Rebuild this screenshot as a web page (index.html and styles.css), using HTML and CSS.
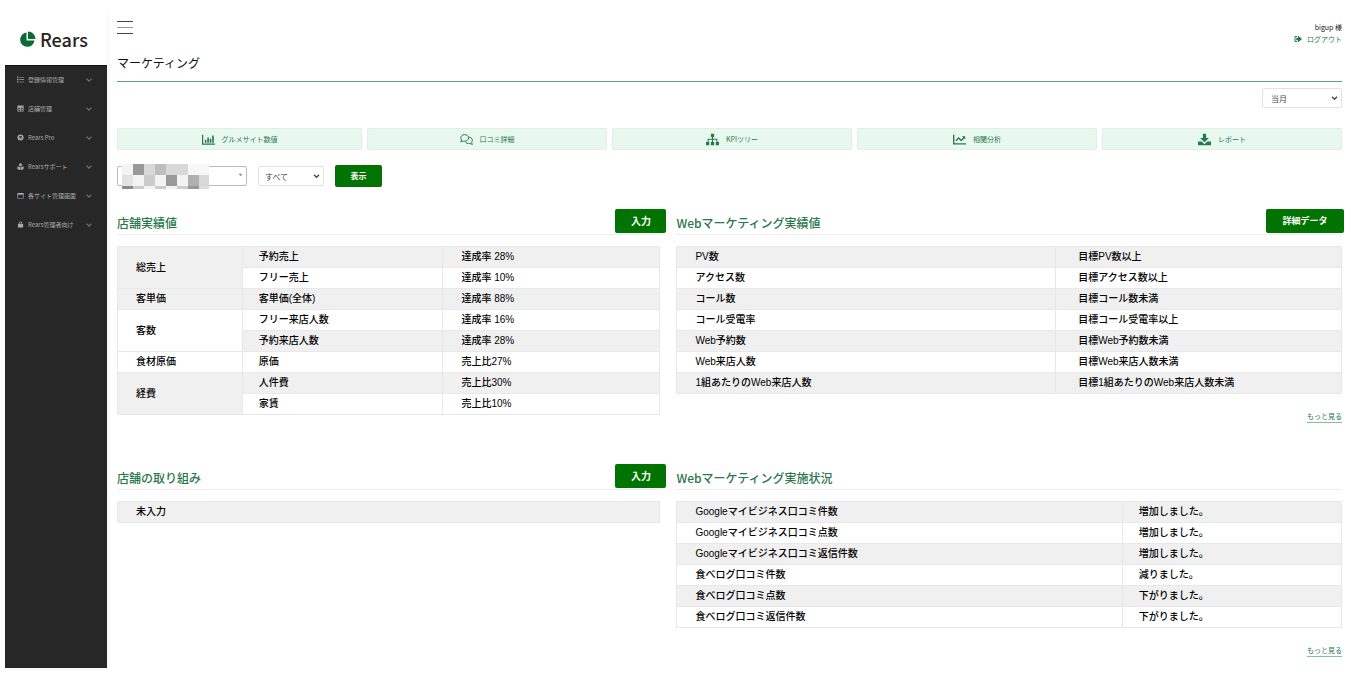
FILE: index.html
```html
<!DOCTYPE html>
<html lang="ja">
<head>
    <meta charset="UTF-8">
    <meta name="viewport" content="width=device-width, initial-scale=1.0">
    <title>マーケティング | Rears</title>
    <link rel="stylesheet" href="styles.css">
</head>
<body>
<div class="wrapper">
    <aside class="sidebar">
        <a href="#" class="logo">
            <svg viewBox="0 0 16 16"><path d="M6.500 1.500V9.500H14.500A7.200 7.200 0 1 1 6.500 1.500Z"/><path d="M8 .5A7.600 7.600 0 0 1 15.600 8.100H8Z"/></svg>
            <span>Rears</span>
        </a>
        <nav class="menu">
            <a href="#">
                <svg viewBox="0 0 16 16"><path d="M0 1h3v3H0zM0 6.500h3v3H0zM0 12h3v3H0zM5 2h11v1.500H5zM5 7.500h11V9H5zM5 13h11v1.500H5z"/></svg>
                <span>登録情報管理</span><i class="chevron"></i>
            </a>
            <a href="#">
                <svg viewBox="0 0 16 16"><path fill-rule="evenodd" d="M1 1h14v14H1zM3 6v2.500h4V6zM9 6v2.500h4V6zM3 10.500V13h4v-2.500zM9 10.500V13h4v-2.500z"/></svg>
                <span>店舗管理</span><i class="chevron"></i>
            </a>
            <a href="#">
                <svg viewBox="0 0 16 16"><path fill-rule="evenodd" d="M8 1a7 7 0 1 1 0 14A7 7 0 0 1 8 1zM5 4v3.500L8 9l3-1.500V4L8 5.500zM5 10l3 2.500 3-2.500-3 .8z"/></svg>
                <span>Rears Pro</span><i class="chevron"></i>
            </a>
            <a href="#">
                <svg viewBox="0 0 16 16"><circle cx="8" cy="4" r="3.500"/><path d="M1 7.500l6.500 2V16L1 14zM15 7.500l-6.500 2V16l6.500-2z"/></svg>
                <span>Rearsサポート</span><i class="chevron"></i>
            </a>
            <a href="#">
                <svg viewBox="0 0 16 16"><path fill-rule="evenodd" d="M1 2h14v13H1zM2.500 6.500v7h11v-7z"/></svg>
                <span>各サイト管理画面</span><i class="chevron"></i>
            </a>
            <a href="#">
                <svg viewBox="0 0 16 16"><path fill-rule="evenodd" d="M2 7h2V5a4 4 0 0 1 8 0v2h2v8H2zM6 7h4V5a2 2 0 0 0-4 0z"/></svg>
                <span>Rears管理者向け</span><i class="chevron"></i>
            </a>
        </nav>
    </aside>

    <main class="main">
        <header class="header">
            <button type="button" class="hamburger" aria-label="メニュー"><span></span><span></span><span></span></button>
            <div class="user">
                <p>bigup 様</p>
                <a href="#">
                    <svg viewBox="0 0 16 16"><path d="M6 2v2H3v8h3v2H3a2 2 0 0 1-2-2V4a2 2 0 0 1 2-2zM8 1l8 7-8 7v-4.500H4.500v-5H8z"/></svg>
                    ログアウト
                </a>
            </div>
        </header>
        <h1>マーケティング</h1>

        <div class="period">
            <select class="select" aria-label="期間">
                <option>当月</option>
            </select>
        </div>

        <nav class="tabs">
            <a href="#">
                <svg viewBox="0 0 16 16"><path d="M0 2h1.500v11H16v1.500H0zM3.500 8.500h2V12h-2zM6.500 5.500h2V12h-2zM9.500 7h2v5h-2zM12.500 3h2v9h-2z"/></svg>
                グルメサイト数値
            </a>
            <a href="#">
                <svg viewBox="0 0 16 16" class="line"><path d="M5.500 2C2.900 2 1 3.700 1 6c0 1 .4 1.900 1 2.600L1 11l3-1.100c.5.100 1 .2 1.500.2 3 0 5-1.800 5-4.100S8.300 2 5.500 2z"/><path d="M10.500 5.100c2.700 0 4.700 1.500 4.700 3.900 0 1-.4 1.800-1 2.500l1 2.500-3.200-1.100c-2.500.5-4.500-.3-5.500-2.400"/></svg>
                口コミ詳細
            </a>
            <a href="#">
                <svg viewBox="0 0 16 16"><path d="M6 1h4v4H8.700v2H14v4h2v4h-4v-4h.8V8.200H8.700V11H10v4H6v-4h1.300V8.200H3.200V11H4v4H0v-4h2V7h5.300V5H6z"/></svg>
                KPIツリー
            </a>
            <a href="#">
                <svg viewBox="0 0 16 16"><path d="M0 2h1.700v10.500H16v1.700H0zM3 9l4-4 3 3 2.500-2.500L11 4h4v4l-1.300-1.300L10 10.500l-3-3L4.200 10.200z"/></svg>
                相関分析
            </a>
            <a href="#">
                <svg viewBox="0 0 16 16"><path d="M6 1h4v5h3.500L8 11.500 2.500 6H6zM0 10.500h4.500L8 13.700l3.500-3.200H16V15H0z"/></svg>
                レポート
            </a>
        </nav>

        <form class="filter">
            <div class="shop">
                <select class="select" aria-label="店舗">
                    <option></option>
                </select>
                <svg class="mosaic" viewBox="0 0 87 25" shape-rendering="crispEdges">
                    <rect width="87" height="25" fill="#f3f3f3"/>
                    <rect x="11" width="11" height="11" fill="#999"/>
                    <rect x="22" width="11" height="11" fill="#d8d8d8"/>
                    <rect x="33" width="11" height="11" fill="#bdbdbd"/>
                    <rect x="44" width="22" height="11" fill="#d8d8d8"/>
                    <rect x="66" width="21" height="11" fill="#f7f7f7"/>
                    <rect y="11" width="11" height="11" fill="#e3e3e3"/>
                    <rect x="22" y="11" width="11" height="11" fill="#cbcbcb"/>
                    <rect x="44" y="11" width="11" height="11" fill="#999"/>
                    <rect x="66" y="11" width="11" height="11" fill="#b0b0b0"/>
                    <rect x="77" y="11" width="10" height="11" fill="#d8d8d8"/>
                    <rect y="22" width="11" height="3" fill="#8a8a8a"/>
                    <rect x="11" y="22" width="11" height="3" fill="#ccc"/>
                    <rect x="33" y="22" width="11" height="3" fill="#ccc"/>
                    <rect x="55" y="22" width="11" height="3" fill="#ccc"/>
                    <rect x="66" y="22" width="11" height="3" fill="#999"/>
                    <rect x="77" y="22" width="10" height="3" fill="#ddd"/>
                </svg>
            </div>
            <select class="select" aria-label="媒体">
                <option>すべて</option>
            </select>
            <button type="submit" class="btn btn-show">表示</button>
        </form>

        <div class="panels">
            <section>
                <div class="panel-head">
                    <h2>店舗実績値</h2>
                    <button type="button" class="btn">入力</button>
                </div>
                <table class="sales">
                    <tr><th rowspan="2">総売上</th><td>予約売上</td><td>達成率 28%</td></tr>
                    <tr><td>フリー売上</td><td>達成率 10%</td></tr>
                    <tr><th>客単価</th><td>客単価(全体)</td><td>達成率 88%</td></tr>
                    <tr><th rowspan="2">客数</th><td>フリー来店人数</td><td>達成率 16%</td></tr>
                    <tr><td>予約来店人数</td><td>達成率 28%</td></tr>
                    <tr><th>食材原価</th><td>原価</td><td>売上比27%</td></tr>
                    <tr><th rowspan="2">経費</th><td>人件費</td><td>売上比30%</td></tr>
                    <tr><td>家賃</td><td>売上比10%</td></tr>
                </table>
            </section>

            <section>
                <div class="panel-head">
                    <h2>Webマーケティング実績値</h2>
                    <button type="button" class="btn btn-detail">詳細データ</button>
                </div>
                <table class="result">
                    <tr><th>PV数</th><td>目標PV数以上</td></tr>
                    <tr><th>アクセス数</th><td>目標アクセス数以上</td></tr>
                    <tr><th>コール数</th><td>目標コール数未満</td></tr>
                    <tr><th>コール受電率</th><td>目標コール受電率以上</td></tr>
                    <tr><th>Web予約数</th><td>目標Web予約数未満</td></tr>
                    <tr><th>Web来店人数</th><td>目標Web来店人数未満</td></tr>
                    <tr><th>1組あたりのWeb来店人数</th><td>目標1組あたりのWeb来店人数未満</td></tr>
                </table>
                <div class="more"><a href="#">もっと見る</a></div>
            </section>

            <section>
                <div class="panel-head">
                    <h2>店舗の取り組み</h2>
                    <button type="button" class="btn">入力</button>
                </div>
                <table>
                    <tr><th>未入力</th></tr>
                </table>
            </section>

            <section>
                <div class="panel-head">
                    <h2>Webマーケティング実施状況</h2>
                </div>
                <table class="status">
                    <tr><th>Googleマイビジネス口コミ件数</th><td>増加しました。</td></tr>
                    <tr><th>Googleマイビジネス口コミ点数</th><td>増加しました。</td></tr>
                    <tr><th>Googleマイビジネス口コミ返信件数</th><td>増加しました。</td></tr>
                    <tr><th>食べログ口コミ件数</th><td>減りました。</td></tr>
                    <tr><th>食べログ口コミ点数</th><td>下がりました。</td></tr>
                    <tr><th>食べログ口コミ返信件数</th><td>下がりました。</td></tr>
                </table>
                <div class="more"><a href="#">もっと見る</a></div>
            </section>
        </div>
    </main>
</div>
</body>
</html>
```
FILE: styles.css
```css
* {
    box-sizing: border-box;
}
body {
    margin: 0;
    font-family: "Noto Sans CJK JP", sans-serif;
    font-size: 7px;
    color: #222;
    background-color: #fff;
}
h1, h2, p {
    margin: 0;
}
a {
    color: inherit;
    text-decoration: none;
}
button, select {
    font-family: inherit;
}
svg {
    display: block;
    fill: currentColor;
}
.wrapper {
    display: flex;
    min-height: 100vh;
    padding: 12px 27px 12px 5px;
}

/* sidebar */
.sidebar {
    display: flex;
    flex-direction: column;
    flex: none;
    width: 102px;
    box-shadow: 2px 2px 2px rgba(0, 0, 0, 0.03);
}
.logo {
    display: flex;
    align-items: center;
    gap: 4px;
    height: 53px;
    padding-left: 15px;
    font-size: 18px;
    font-weight: 500;
    line-height: 24px;
    color: #2b2320;
}
.logo svg {
    width: 16px;
    height: 16px;
    color: #0b6b35;
}
.menu {
    flex: 1;
    background-color: #272727;
    border-top: 1px solid #111;
}
.menu a {
    display: flex;
    align-items: center;
    gap: 4px;
    height: 29px;
    padding: 0 16px 2px 12px;
    font-size: 6px;
    color: #aaa;
}
.menu svg {
    width: 7px;
    height: 7px;
}
.chevron {
    width: 4px;
    height: 4px;
    margin: 0 0 2px auto;
    border-right: 1px solid #777;
    border-bottom: 1px solid #777;
    transform: rotate(45deg);
}

/* main */
.main {
    flex: 1;
    min-width: 0;
    padding-left: 10px;
}
.header {
    display: flex;
    justify-content: space-between;
    align-items: flex-start;
    height: 36px;
    padding-top: 9px;
}
.hamburger {
    display: flex;
    flex-direction: column;
    gap: 5px;
    width: 16px;
    padding: 0;
    border: none;
    background: none;
    cursor: pointer;
}
.hamburger span {
    height: 1px;
    width: 100%;
    background-color: #444;
}
.hamburger span:nth-child(2) {
    background-color: #999;
}
.user {
    line-height: 12px;
    text-align: right;
}
.user a {
    display: flex;
    align-items: center;
    gap: 5px;
    color: #27784a;
}
.user svg {
    width: 8px;
    height: 8px;
}
h1 {
    height: 34px;
    font-size: 12px;
    font-weight: 400;
    line-height: 30px;
    color: #111;
    border-bottom: 1px solid #5f9f7b;
}
.period {
    display: flex;
    justify-content: flex-end;
    padding: 6px 0 20px;
}
.select {
    appearance: none;
    width: 66px;
    height: 20px;
    padding: 0 6px;
    font-size: 8px;
    color: #444;
    border: 1px solid #dfe3e8;
    border-radius: 2px;
    background: #fff url("data:image/svg+xml,%3Csvg xmlns='http://www.w3.org/2000/svg' viewBox='0 0 8 6'%3E%3Cpath d='M1 1l3 3 3-3' fill='none' stroke='%23404850' stroke-width='1.600'/%3E%3C/svg%3E") no-repeat right 3px center / 7px 5px;
}
.period .select {
    width: 80px;
    padding: 0 8px;
}
.tabs {
    display: grid;
    grid-template-columns: 245fr repeat(4, 240fr);
    gap: 5px;
}
.tabs a {
    display: flex;
    justify-content: center;
    align-items: center;
    gap: 7px;
    height: 22px;
    color: #27784a;
    background-color: #e9f8ef;
    border: 1px solid #dcf1e4;
    border-radius: 2px;
}
.tabs svg {
    width: 13px;
    height: 13px;
}
.tabs .line {
    fill: none;
    stroke: currentColor;
    stroke-width: 1.2;
}
.filter {
    display: flex;
    align-items: center;
    gap: 11px;
    padding: 15px 0 22px;
}
.shop {
    position: relative;
}
.shop .select {
    display: block;
    width: 130px;
    border-color: #bbb;
    background-image: url("data:image/svg+xml,%3Csvg xmlns='http://www.w3.org/2000/svg' viewBox='0 0 8 6'%3E%3Cpath d='M1 1h6L4 5z' fill='%23888'/%3E%3C/svg%3E");
    background-size: 5px 4px;
    background-position: right 3px top 6px;
}
.mosaic {
    position: absolute;
    top: -2px;
    left: 5px;
    width: 87px;
    height: 25px;
}

.btn {
    width: 51px;
    height: 24px;
    padding: 0;
    font-size: 10px;
    font-weight: bold;
    line-height: 14px;
    color: #fff;
    background-color: #007300;
    border: none;
    border-radius: 2px;
    cursor: pointer;
}
.btn-show {
    width: 47px;
    height: 22px;
    font-size: 8px;
}
.btn-detail {
    width: 78px;
    font-size: 9px;
}

/* panels */
.panels {
    display: grid;
    grid-template-columns: 543fr 665fr;
    gap: 41px 16px;
}
.panel-head {
    display: flex;
    justify-content: space-between;
    height: 26px;
    margin-bottom: 11px;
    border-bottom: 1px solid #eee;
}
.panel-head h2 {
    font-size: 12px;
    font-weight: 500;
    line-height: 28px;
    color: #27784a;
}
.panel-head .btn {
    margin-right: -6px;
}
.panel-head .btn-detail {
    margin-right: -2px;
}
table {
    width: 100%;
    table-layout: fixed;
    border-collapse: collapse;
    font-family: "Liberation Sans", "Noto Sans CJK JP", sans-serif;
    font-size: 10px;
    line-height: 20px;
    color: #000;
}
th, td {
    height: 21px;
    padding: 0 16px;
    font-weight: 500;
    text-align: left;
    border: 1px solid #e6e8eb;
}
th {
    padding-left: 18px;
}
td + td {
    padding-left: 18px;
}
.result td {
    padding-left: 22px;
}
tr:nth-child(odd) th, tr:nth-child(odd) td {
    background-color: #f0f0f0;
}
.sales th {
    width: 23%;
}
.sales td {
    width: 37%;
}
.sales td + td {
    width: 40%;
}
.result th {
    width: 57%;
}
.status th {
    width: 67%;
}
.more {
    display: flex;
    justify-content: flex-end;
    margin-top: 16px;
    line-height: 12px;
}
.more a {
    color: #27784a;
    border-bottom: 1px solid #8dbb9f;
}
```
